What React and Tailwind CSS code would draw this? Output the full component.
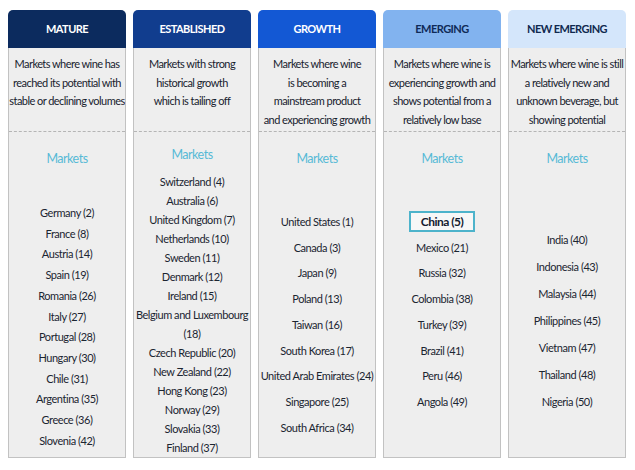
import React from "react";

const columns = [
  {
    title: "MATURE",
    head: "bg-[#0c2b5e] text-white",
    desc: ["Markets where wine has", "reached its potential with", "stable or declining volumes"],
    labelPad: "pt-[17px]",
    listGap: "mt-[34px]",
    row: "leading-[20.7px]",
    items: ["Germany (2)", "France (8)", "Austria (14)", "Spain (19)", "Romania (26)", "Italy (27)", "Portugal (28)", "Hungary (30)", "Chile (31)", "Argentina (35)", "Greece (36)", "Slovenia (42)"],
  },
  {
    title: "ESTABLISHED",
    head: "bg-[#113d8e] text-white",
    desc: ["Markets with strong", "historical growth", "which is tailing off"],
    labelPad: "pt-[13px]",
    listGap: "mt-[7px]",
    row: "leading-[19px]",
    items: ["Switzerland (4)", "Australia (6)", "United Kingdom (7)", "Netherlands (10)", "Sweden (11)", "Denmark (12)", "Ireland (15)", "Belgium and Luxembourg (18)", "Czech Republic (20)", "New Zealand (22)", "Hong Kong (23)", "Norway (29)", "Slovakia (33)", "Finland (37)"],
  },
  {
    title: "GROWTH",
    head: "bg-[#1358d4] text-white",
    desc: ["Markets where wine", "is becoming a", "mainstream product", "and experiencing growth"],
    labelPad: "pt-[17px]",
    listGap: "mt-[40px]",
    row: "leading-[25.7px]",
    items: ["United States (1)", "Canada (3)", "Japan (9)", "Poland (13)", "Taiwan (16)", "South Korea (17)", "United Arab Emirates (24)", "Singapore (25)", "South Africa (34)"],
  },
  {
    title: "EMERGING",
    head: "bg-[#82b3ef] text-[#0f2a58]",
    desc: ["Markets where wine is", "experiencing growth and", "shows potential from a", "relatively low base"],
    labelPad: "pt-[17px]",
    listGap: "mt-[40px]",
    row: "leading-[25.7px]",
    highlight: "China (5)",
    items: ["China (5)", "Mexico (21)", "Russia (32)", "Colombia (38)", "Turkey (39)", "Brazil (41)", "Peru (46)", "Angola (49)"],
  },
  {
    title: "NEW EMERGING",
    head: "bg-[#d4e6fb] text-[#10294f]",
    desc: ["Markets where wine is still", "a relatively new and", "unknown beverage, but", "showing potential"],
    labelPad: "pt-[17px]",
    listGap: "mt-[57px]",
    row: "leading-[27px]",
    items: ["India (40)", "Indonesia (43)", "Malaysia (44)", "Philippines (45)", "Vietnam (47)", "Thailand (48)", "Nigeria (50)"],
  },
];

function Column({ col }) {
  return (
    <div className="w-[118px] h-[448px] flex flex-col">
      <div className={`h-[38px] shrink-0 rounded-t-[5px] flex items-center justify-center text-[11px] font-bold tracking-[-0.55px] ${col.head}`}>
        {col.title}
      </div>
      <div className="flex-1 min-h-0 overflow-hidden flex flex-col bg-[#eeeeee] border-x border-b border-[#c2c2c2]">
        <div className="h-[84px] shrink-0 pt-[7px] border-b border-dashed border-[#b5b5b5] text-center text-[11px] tracking-[-0.55px] leading-[18.7px] text-[#18222e]">
          {col.desc.map((d) => (
            <div key={d} className="whitespace-nowrap">{d}</div>
          ))}
        </div>
        <div className={`${col.labelPad} text-center`}>
          <div className="text-[12.5px] tracking-[-0.5px] leading-[20px] text-[#56bad6]">Markets</div>
          <div className={`${col.listGap} text-[11px] tracking-[-0.45px] text-[#1b2531] ${col.row}`}>
            {col.items.map((it) =>
              it === col.highlight ? (
                <div key={it} className="flex justify-center items-center h-[25.7px]">
                  <span className="w-[66px] h-[21px] border-2 border-[#4db3cb] bg-[#f7f7f7] font-bold text-[12px] tracking-[-0.5px] leading-[17px] text-[#13202f] flex items-center justify-center">
                    {it}
                  </span>
                </div>
              ) : (
                <div key={it}>{it}</div>
              )
            )}
          </div>
        </div>
      </div>
    </div>
  );
}

export default function App() {
  return (
    <div className="w-[635px] h-[470px] bg-white pl-[8px] pt-[10px] flex gap-[7px]" style={{ fontFamily: "Lato, 'Open Sans', sans-serif" }}>
      {columns.map((c) => (
        <Column key={c.title} col={c} />
      ))}
    </div>
  );
}
